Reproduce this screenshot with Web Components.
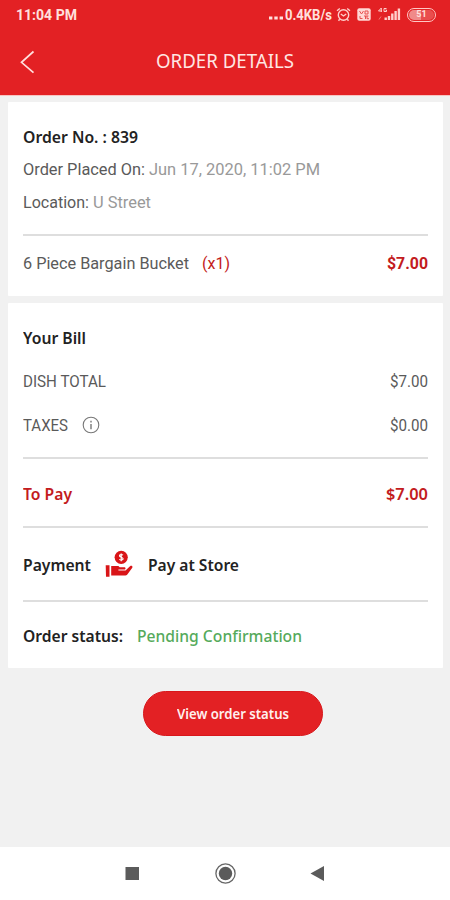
<!DOCTYPE html>
<html lang="en"><head><meta charset="utf-8"><title>Order details</title>
<style>html,body{margin:0;height:100%;background:#f1f1f1}</style></head>
<body><order-screen></order-screen>
<script>
const define=(name,html,setup)=>customElements.define(name,class extends HTMLElement{
  connectedCallback(){
    if(this.shadowRoot)return;
    this.attachShadow({mode:'open'}).innerHTML=html;
    if(setup)setup(this,this.shadowRoot);
  }
});
/* A single line of text condensed or widened to the width in its "w" attribute. */
define('fit-text',`<style>:host{display:inline-block;flex:none;white-space:nowrap;line-height:20px}
span{display:inline-block;transform-origin:0 50%}</style><span><slot></slot></span>`,(el,root)=>{
  const s=root.querySelector('span'),w=+el.getAttribute('w');
  el.style.width=w+'px';
  s.style.transform='scaleX('+w/s.getBoundingClientRect().width+')';
});
define('rule-line',`<style>:host{display:block;height:2px;background:#dedede}</style>`);
define('bill-row',`<style>:host{display:flex;box-sizing:border-box;align-items:center;justify-content:space-between;font:400 16px Roboto,sans-serif;color:#5a5a5a}
div{display:flex;align-items:center}</style><div><slot></slot></div><slot name="end"></slot>`);
define('info-card',`<style>:host{display:block;box-sizing:border-box;background:#fff;margin:0 7px 0 8px;padding:0 15px;border-radius:1px}</style><slot></slot>`);
define('info-icon',`<style>:host{display:block;width:18px;height:18px;margin:-2px 0 0 14px}svg{display:block}</style>
<svg width="18" height="18" viewBox="0 0 18 18"><circle cx="9" cy="9" r="7.8" fill="none" stroke="#777" stroke-width="1.1"/><path d="M9 8v5.2M9 4.8v1.6" stroke="#777" stroke-width="1.4"/></svg>`);
define('pay-icon',`<style>:host{display:block;width:28px;height:28px;margin:-2px 15px 0 14px}svg{display:block}</style>
<svg width="28" height="28" viewBox="0 0 28 28" fill="#d91518"><path d="M.7 15.3h3.8v11.4H1zM6.2 16h7.2l1.3 1.2h4.5c1.6 0 1.8 2.1.2 2.4h-6v.9h7.1l4.5-4.3c1.6-1.2 3.2.3 2.1 1.9l-4.6 6.1c-.8 1-1.6 1.4-2.9 1.4H6.2z"/><circle cx="16.2" cy="7.3" r="6.6"/><path d="M18 5.1c-1-.9-3.5-.8-3.5.7 0 1.7 3.6 1.1 3.6 2.9 0 1.6-2.7 1.7-3.8.7M16.2 3.4v7.8" fill="none" stroke="#fff" stroke-width="1.2"/></svg>`);
define('status-bar',`<style>:host{display:flex;height:30px;box-sizing:border-box;padding:0 14px 0 16px;align-items:center;justify-content:space-between;color:#ffe0dd;font:700 14px Roboto,sans-serif}
div{display:flex;align-items:center}svg{display:block}.dots{margin:5px 1px 0 0}.alarm{margin:-2px 0 0 4px}.volte{margin:-1px 0 0 6px}.signal{margin:-2px 0 0 6px}.battery{margin:-1px 0 0 6px;display:flex;align-items:center;justify-content:center;box-sizing:border-box;width:29px;height:14px;border:1.4px solid #ffc8c4;border-radius:7px;padding:1px}
.level{display:flex;align-items:center;justify-content:center;width:100%;height:100%;border-radius:5px;background:linear-gradient(90deg,#f08a89 50%,#e94e4e 50%);font-size:9px;line-height:9px}</style>
<fit-text w="61">11:04 PM</fit-text><div>
<svg class="dots" width="16" height="4" fill="#ffe0dd"><rect x="1" y="0.5" width="3.4" height="3"/><rect x="6.3" y="0.5" width="3.4" height="3"/><rect x="11.6" y="0.5" width="3.4" height="3"/></svg>
<fit-text w="47">0.4KB/s</fit-text>
<svg class="alarm" width="15" height="15" viewBox="0 0 15 15" fill="none" stroke="#ffd0cc" stroke-width="1.4"><circle cx="7.5" cy="8" r="5.2"/><path d="M1 3.7 3.8 1.5M14 3.7l-2.8-2.2M4.8 7l2.7 2 2.7-2M3.7 12.2l-1.2 1.5M11.3 12.2l1.2 1.5"/></svg>
<svg class="volte" width="14" height="13" viewBox="0 0 14 13"><rect x=".3" y=".3" width="13.4" height="12.4" rx="2" fill="#ffd8d5"/><path d="M2.5 3l2 3 2-3M8 3h3v3H8zM3 8v2.5h2.5M7 8h3M8.5 8v3M11.5 8H10v2.7h2" fill="none" stroke="#e8504f" stroke-width="1"/></svg>
<svg class="signal" width="24" height="14" viewBox="0 0 24 14" fill="#ffd0cc"><path d="M7.5 10.5h2.4v2.5H7.5zM10.8 9h2.4v4h-2.4zM14.1 6.5h2.4v6.5h-2.4zM17.4 4h2.4v9h-2.4zM20.7 1.5h2.4V13h-2.4z"/><path d="M4.3 5V1L1.5 4H5M9.5 1.5H7v3h2.5V3H8.4" stroke="#ffd0cc" fill="none"/><path d="M2 12.5 4 9.5" stroke="#f07a79" fill="none"/></svg>
<span class="battery"><span class="level">51</span></span></div>`);
define('title-bar',`<style>:host{display:grid;grid-template-columns:48px 1fr 48px;height:65px;align-items:center;color:#ffe6e3;font:400 20.3px "Noto Sans",sans-serif}
svg{display:block;margin:-1px 0 0 20px}div{text-align:center;margin-top:-6px}fit-text{text-align:left}</style>
<svg width="15" height="24" viewBox="0 0 15 24" fill="none" stroke="#ffe0dd" stroke-width="1.7"><path d="M13.5 1.5 1.5 12.3l12 10.3"/></svg><div><fit-text w="138">ORDER DETAILS</fit-text></div>`);
define('pill-button',`<style>:host{display:block}button{display:flex;align-items:center;justify-content:center;width:180px;height:45px;margin:23px 0 0 143px;padding:0;border:1px solid #d8171b;border-radius:23px;background:#e32124;color:#fff0ee;font:600 14px "Noto Sans",sans-serif}</style><button><slot></slot></button>`);
define('nav-bar',`<style>:host{display:block;height:53px;margin-top:auto;background:#fff}svg{display:block}</style>
<svg width="450" height="53" viewBox="0 0 450 53" fill="#5b5b5b"><rect x="125.5" y="20" width="13.5" height="13"/><circle cx="225.5" cy="26.5" r="9.6" fill="none" stroke="#666" stroke-width="1.3"/><circle cx="225.5" cy="26.5" r="6.7"/><path d="M310.5 26.5 324 19v15z"/></svg>`);
define('order-screen',`<style>:host{display:flex;flex-direction:column;width:450px;height:900px;background:#f1f1f1}
header{height:95px;background:#e32124;box-shadow:0 1px #f8c4c1;margin-bottom:7px;flex:none}
.first{height:194px;padding-top:19px}.bill{height:365px;margin-top:7px;padding-top:17px}
.b,.b fit-text{font-family:"Noto Sans",sans-serif;font-weight:600;color:#222}
.red,.b .red{color:#c31b20}.grey{color:#999}.green,.b .green{color:#55aa5b;font-weight:500}
</style>
<header><status-bar></status-bar><title-bar></title-bar></header>
<info-card class="first">
<bill-row class="b" style="height:32px"><fit-text w="115">Order No. : 839</fit-text></bill-row>
<bill-row style="height:33px"><fit-text w="122">Order Placed On:</fit-text><fit-text w="171" class="grey" style="margin-left:4px">Jun 17, 2020, 11:02 PM</fit-text></bill-row>
<bill-row style="height:34px"><fit-text w="66">Location:</fit-text><fit-text w="58" class="grey" style="margin-left:4px">U Street</fit-text></bill-row>
<rule-line style="margin-top:14px"></rule-line>
<bill-row style="height:56px"><fit-text w="166">6 Piece Bargain Bucket</fit-text><fit-text w="28" class="red" style="margin-left:13px">(x1)</fit-text><fit-text slot="end" w="41" class="red" style="font-weight:700">$7.00</fit-text></bill-row>
</info-card>
<info-card class="bill">
<bill-row class="b" style="height:35px;padding-top:1px"><fit-text w="63">Your Bill</fit-text></bill-row>
<bill-row style="height:54px"><fit-text w="83">DISH TOTAL</fit-text><fit-text slot="end" w="38">$7.00</fit-text></bill-row>
<bill-row style="height:34px"><fit-text w="45">TAXES</fit-text><info-icon></info-icon><fit-text slot="end" w="38">$0.00</fit-text></bill-row>
<rule-line style="margin-top:14px"></rule-line>
<bill-row class="b" style="height:67px;padding-top:3px"><fit-text class="red" w="49">To Pay</fit-text><fit-text class="red" slot="end" w="42">$7.00</fit-text></bill-row>
<rule-line></rule-line>
<bill-row class="b" style="height:72px;padding-top:2px"><fit-text w="68">Payment</fit-text><pay-icon></pay-icon><fit-text w="91">Pay at Store</fit-text></bill-row>
<rule-line></rule-line>
<bill-row class="b" style="height:68px"><fit-text w="100">Order status:</fit-text><fit-text class="green" w="165" style="margin-left:14px">Pending Confirmation</fit-text></bill-row>
</info-card>
<pill-button><fit-text w="112">View order status</fit-text></pill-button>
<nav-bar></nav-bar>`);
</script></body></html>
